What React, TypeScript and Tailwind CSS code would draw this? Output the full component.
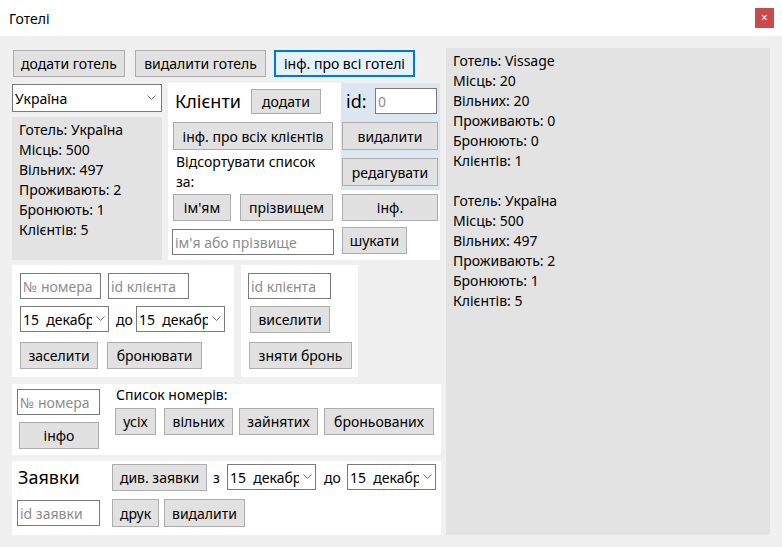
import React from "react";

const F = "font-['Noto_Sans','Open_Sans',sans-serif]";

function Btn({ children, className = "" }: { children: React.ReactNode; className?: string }) {
  return (
    <div
      className={`flex items-center justify-center shrink-0 bg-[#e1e1e1] border border-[#adadad] text-[14px] text-black whitespace-nowrap overflow-hidden ${className}`}
    >
      {children}
    </div>
  );
}

function Input({ ph, className = "" }: { ph: string; className?: string }) {
  return (
    <div
      className={`flex items-center shrink-0 bg-white border border-[#7a7a7a] px-[2px] text-[14px] text-[#8d8d8d] whitespace-nowrap overflow-hidden ${className}`}
    >
      {ph}
    </div>
  );
}

function Chevron() {
  return (
    <svg width="9" height="6" viewBox="0 0 9 6" className="shrink-0">
      <polyline points="0.5,0.5 4.5,4.5 8.5,0.5" fill="none" stroke="#6d6d6d" strokeWidth="1" />
    </svg>
  );
}

function DateSel({ className = "" }: { className?: string }) {
  return (
    <div
      className={`flex items-center shrink-0 bg-white border border-[#7a7a7a] h-[26px] w-[89px] text-[14px] text-black ${className}`}
    >
      <div className="flex-1 overflow-hidden whitespace-nowrap pl-[2px]">15&nbsp;&nbsp;декабря</div>
      <div className="w-[16px] flex items-center justify-center bg-white">
        <Chevron />
      </div>
    </div>
  );
}

export default function App() {
  return (
    <div className={`w-[782px] h-[547px] bg-[#f0f0f0] flex flex-col overflow-hidden ${F} text-black`}>
      {/* title bar */}
      <div className="h-[36px] bg-white flex items-center justify-between shrink-0">
        <div className="pl-[9px] text-[14px]">Готелі</div>
        <div className="mr-[8px] w-[19px] h-[20px] bg-[#c84a4c] flex items-center justify-center text-white text-[12px] leading-none">
          ×
        </div>
      </div>

      <div className="flex flex-1">
        {/* left column */}
        <div className="w-[440px] shrink-0 pl-[12px] flex flex-col">
          {/* row 1 */}
          <div className="flex mt-[14px] h-[27px]">
            <Btn className="ml-[1px] w-[112px] h-[27px]">додати готель</Btn>
            <Btn className="ml-[10px] w-[131px] h-[27px]">видалити готель</Btn>
            <Btn className="ml-[8px] w-[141px] h-[27px] !border-2 !border-[#0078d7] !bg-[#e5f1fb]">інф. про всі готелі</Btn>
          </div>

          {/* row 2 */}
          <div className="flex mt-[6px] h-[177px]">
            <div className="w-[150px] shrink-0 flex flex-col">
              <div className="mt-[1px] h-[28px] bg-white border border-[#7a7a7a] flex items-center justify-between pl-[2px] pr-[5px] text-[14px]">
                <span>Україна</span>
                <Chevron />
              </div>
              <div className="mt-[5px] flex-1 bg-[#e3e3e3] pl-[7px] pt-[3px] text-[14px] leading-[20px]">
                <div>Готель: Україна</div>
                <div>Місць: 500</div>
                <div>Вільних: 497</div>
                <div>Проживають: 2</div>
                <div>Бронюють: 1</div>
                <div>Клієнтів: 5</div>
              </div>
            </div>

            {/* clients panel */}
            <div className="ml-[6px] w-[272px] shrink-0 bg-white flex">
              <div className="w-[173px] shrink-0 flex flex-col">
                <div className="flex items-center mt-[5px] h-[26px]">
                  <div className="pl-[7px] w-[83px] text-[18px] leading-none">Клієнти</div>
                  <Btn className="w-[70px] h-[25px]">додати</Btn>
                </div>
                <Btn className="ml-[5px] mt-[8px] w-[160px] h-[28px]">інф. про всіх клієнтів</Btn>
                <div className="pl-[8px] mt-[2px] text-[14px] leading-[20px]">
                  Відсортувати список
                  <br />
                  за:
                </div>
                <div className="flex mt-[2px]">
                  <Btn className="ml-[5px] w-[58px] h-[27px]">ім'ям</Btn>
                  <Btn className="ml-[9px] w-[93px] h-[27px]">прізвищем</Btn>
                </div>
                <Input ph="ім'я або прізвище" className="ml-[4px] mt-[8px] w-[162px] h-[26px]" />
              </div>
              <div className="w-[99px] shrink-0 flex flex-col">
                <div className="h-[107px] bg-[#dde7f1] flex flex-col">
                  <div className="flex items-center mt-[5px] h-[26px]">
                    <div className="pl-[5px] w-[34px] text-[18px] leading-none">id:</div>
                    <Input ph="0" className="w-[62px] h-[26px]" />
                  </div>
                  <Btn className="ml-[1px] mt-[8px] w-[96px] h-[28px]">видалити</Btn>
                  <Btn className="ml-[1px] mt-[8px] w-[96px] h-[28px]">редагувати</Btn>
                </div>
                <Btn className="ml-[1px] mt-[4px] w-[96px] h-[27px]">інф.</Btn>
                <Btn className="ml-[1px] mt-[6px] w-[65px] h-[27px]">шукати</Btn>
              </div>
            </div>
          </div>

          {/* row 3 */}
          <div className="flex mt-[5px] h-[112px]">
            <div className="w-[222px] shrink-0 bg-white flex flex-col pl-[8px] pt-[8px]">
              <div className="flex">
                <Input ph="№ номера" className="w-[81px] h-[26px]" />
                <Input ph="id клієнта" className="ml-[7px] w-[81px] h-[26px]" />
              </div>
              <div className="flex items-center mt-[7px]">
                <DateSel />
                <div className="w-[27px] pl-[7px] text-[14px]">до</div>
                <DateSel />
              </div>
              <div className="flex mt-[10px]">
                <Btn className="w-[78px] h-[27px]">заселити</Btn>
                <Btn className="ml-[9px] w-[95px] h-[27px]">бронювати</Btn>
              </div>
            </div>
            <div className="ml-[7px] w-[117px] shrink-0 bg-white flex flex-col pl-[7px] pt-[8px]">
              <Input ph="id клієнта" className="w-[83px] h-[26px]" />
              <Btn className="ml-[2px] mt-[7px] w-[80px] h-[27px]">виселити</Btn>
              <Btn className="ml-[1px] mt-[9px] w-[103px] h-[27px]">зняти бронь</Btn>
            </div>
          </div>

          {/* row 4 */}
          <div className="mt-[7px] w-[429px] h-[71px] bg-white flex">
            <div className="flex flex-col pl-[5px] pt-[5px]">
              <Input ph="№ номера" className="w-[83px] h-[26px]" />
              <Btn className="ml-[2px] mt-[7px] w-[80px] h-[27px]">інфо</Btn>
            </div>
            <div className="flex flex-col ml-[15px]">
              <div className="mt-[1px] h-[20px] leading-[20px] text-[14px] pl-[1px]">Список номерів:</div>
              <div className="flex mt-[3px]">
                <Btn className="w-[41px] h-[27px]">усіх</Btn>
                <Btn className="ml-[8px] w-[69px] h-[27px]">вільних</Btn>
                <Btn className="ml-[6px] w-[79px] h-[27px]">зайнятих</Btn>
                <Btn className="ml-[6px] w-[110px] h-[27px]">броньованих</Btn>
              </div>
            </div>
          </div>

          {/* row 5 */}
          <div className="mt-[6px] w-[429px] h-[74px] bg-white flex flex-col">
            <div className="flex items-center mt-[2px] h-[28px]">
              <div className="pl-[6px] w-[100px] text-[18px] leading-none">Заявки</div>
              <Btn className="w-[95px] h-[27px]">див. заявки</Btn>
              <div className="w-[20px] pl-[6px] text-[14px]">з</div>
              <DateSel />
              <div className="w-[31px] pl-[8px] text-[14px]">до</div>
              <DateSel />
            </div>
            <div className="flex items-center mt-[8px]">
              <Input ph="id заявки" className="ml-[5px] w-[83px] h-[26px]" />
              <Btn className="ml-[12px] w-[47px] h-[28px]">друк</Btn>
              <Btn className="ml-[5px] w-[81px] h-[28px]">видалити</Btn>
            </div>
          </div>
        </div>

        {/* right panel */}
        <div className="ml-[6px] mt-[12px] w-[324px] h-[487px] bg-[#e3e3e3] pl-[7px] pt-[3px] text-[14px] leading-[20px]">
          <div>Готель: Vissage</div>
          <div>Місць: 20</div>
          <div>Вільних: 20</div>
          <div>Проживають: 0</div>
          <div>Бронюють: 0</div>
          <div>Клієнтів: 1</div>
          <div>&nbsp;</div>
          <div>Готель: Україна</div>
          <div>Місць: 500</div>
          <div>Вільних: 497</div>
          <div>Проживають: 2</div>
          <div>Бронюють: 1</div>
          <div>Клієнтів: 5</div>
        </div>
      </div>
    </div>
  );
}
